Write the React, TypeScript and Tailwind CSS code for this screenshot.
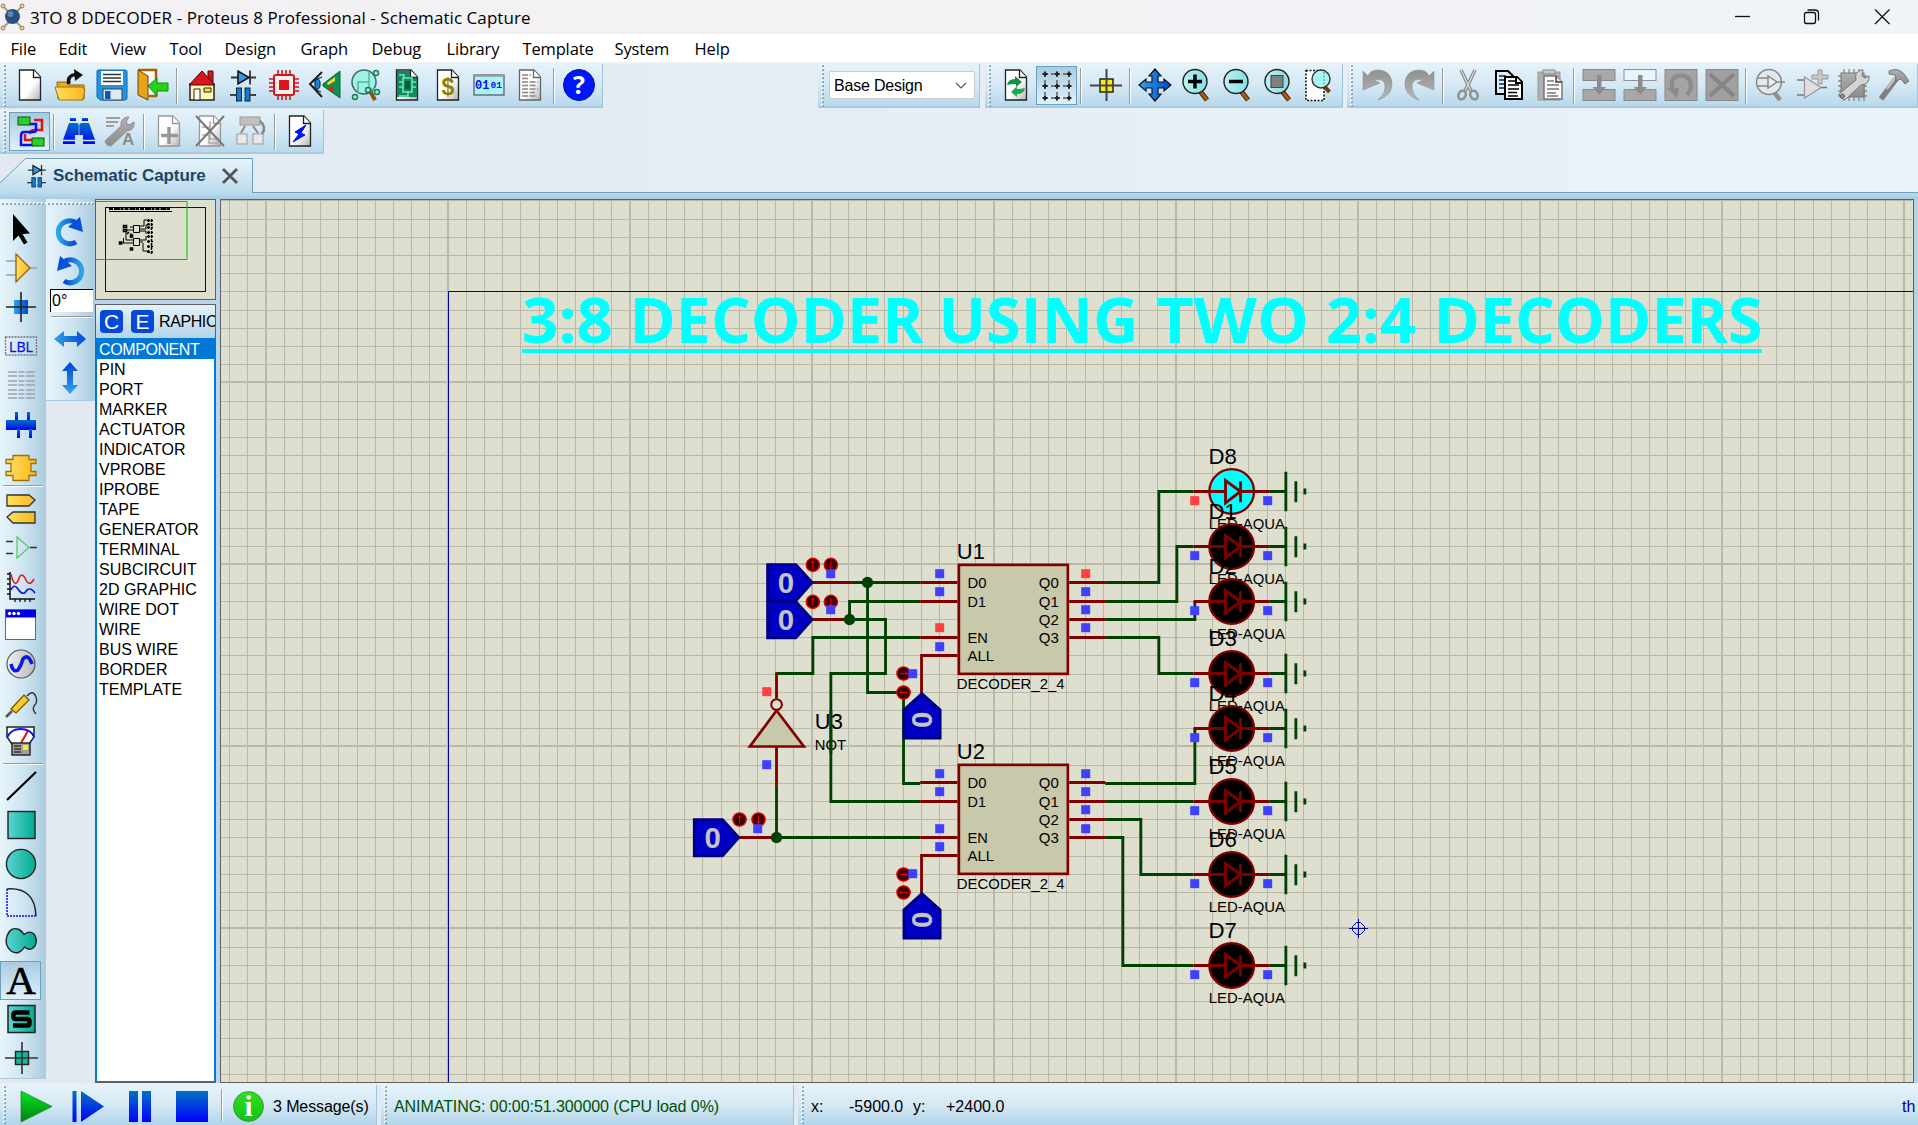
import React from 'react';

type Kids = { children?: React.ReactNode };

/* ---------- shared pieces ---------- */

function Ico({ children, s = 32 }: Kids & { s?: number }) {
  return (
    <svg width={s} height={s} viewBox="0 0 32 32" className="block shrink-0 overflow-visible">
      {children}
    </svg>
  );
}

function Defs() {
  const g = (id: string, a: string, b: string, vertical = false) => (
    <linearGradient id={id} x1="0" y1="0" x2={vertical ? '0' : '1'} y2={vertical ? '1' : '0'}>
      <stop offset="0" stopColor={a} />
      <stop offset="1" stopColor={b} />
    </linearGradient>
  );
  return (
    <svg width="0" height="0" className="absolute">
      <defs>
        {g('blueH', '#2fa4e4', '#0048d8')}
        {g('blueHr', '#0048d8', '#2fa4e4')}
        {g('blueV', '#0072c0', '#0000ff', true)}
        {g('blueVr', '#0040d8', '#30a8e8', true)}
        {g('teal', '#5cd4d4', '#00ac90')}
        {g('gold', '#ffe060', '#f8b820')}
        {g('grayV', '#909090', '#b8b8b8', true)}
        {g('grayH', '#f0f0f0', '#b8b8b8')}
        {g('greenV', '#00e820', '#008010', true)}
        {g('infoV', '#30e020', '#18c018', true)}
        {g('lens', '#b8f4f4', '#88dce4')}
        {g('gray2', '#b0b0b0', '#8c8c8c', true)}
        <linearGradient id="page" x1="0" y1="0" x2="1" y2="1">
          <stop offset="0.55" stopColor="#fff" />
          <stop offset="1" stopColor="#b0b0b0" />
        </linearGradient>
      </defs>
    </svg>
  );
}

const Page = ({ stroke = '#222' }: { stroke?: string }) => (
  <g>
    <path d="M5.500 1H20l6.500 7V31H5.500Z" fill="url(#page)" stroke={stroke} strokeWidth="1.300" />
    <path d="M19.500 1V8.500H26.500" fill="#fff" stroke={stroke} strokeWidth="1.300" />
  </g>
);

const Schem = () => (
  <g>
    <path d="M4 8.500H29M23 1.500V15.500" stroke="#333" strokeWidth="1.800" />
    <path d="M11 2V15L22 8.500Z" fill="#2c9ce0" stroke="#111" strokeWidth="1.500" />
    <path d="M3 26H29" stroke="#333" strokeWidth="1.800" />
    <rect x="9.500" y="19" width="5" height="13" fill="#1878d0" stroke="#123" />
    <rect x="18" y="19" width="5" height="13" fill="#1878d0" stroke="#123" />
    <rect x="15" y="24" width="2.500" height="4" fill="#c8e4f4" />
  </g>
);

const Lens = ({ children }: Kids) => (
  <g>
    <path d="M20 22L27 31" stroke="#402000" strokeWidth="5" />
    <path d="M20 22L27 31" stroke="#a85c10" strokeWidth="3" />
    <circle cx="15" cy="12.500" r="12" fill="url(#lens)" stroke="#222" strokeWidth="1.400" />
    {children}
  </g>
);

/* ---------- toolbar icons ---------- */

const icons: Record<string, React.ReactNode> = {
  newFile: <Page />,
  open: (
    <g>
      <path d="M2 13h9l3 3h15v14H3Z" fill="#e8a820" stroke="#906000" />
      <path d="M0 18h26l4 2-2 11H4Z" fill="url(#gold)" stroke="#a87000" />
      <path d="M14 15c-2-6 2-10 8-9" fill="none" stroke="#111" strokeWidth="3.500" />
      <path d="M19 0l9 6-8 6Z" fill="#111" />
    </g>
  ),
  save: (
    <g>
      <path d="M2 1H29q2 0 2 2V29q0 2-2 2H4l-3-3V3q0-2 1-2Z" fill="#2094e0" stroke="#0868b0" />
      <rect x="5" y="2" width="22" height="14" fill="#fff" />
      <path d="M7 5.500H25M7 9H25M7 12.500H25" stroke="#333" strokeWidth="1.300" />
      <rect x="7" y="20" width="19" height="11" fill="#e0e8f0" stroke="#345" />
      <rect x="9" y="22" width="5.500" height="8" fill="#1058b0" />
    </g>
  ),
  exit: (
    <g>
      <path d="M1 1H19V27H12" fill="#fff" stroke="#a86000" strokeWidth="2.500" />
      <path d="M1 1l10 6V31L1 26Z" fill="#e8a418" stroke="#704000" />
      <path d="M11 17l9-8v5h11v8H20v5Z" fill="#28d018" stroke="#109010" />
    </g>
  ),
  home: (
    <g>
      <path d="M4 15H28V31H4Z" fill="#fff8b8" stroke="#222" strokeWidth="1.500" />
      <path d="M22 2h5v13h-5Z" fill="#c02020" stroke="#600" />
      <path d="M16 2L29 16H3Z" fill="#d81818" stroke="#500" />
      <path d="M8 20h6v11H8Z" fill="#fff" stroke="#222" />
      <path d="M18 19h7v4h-7Z" fill="#f8e820" stroke="#222" />
    </g>
  ),
  schem: <Schem />,
  chip: (
    <g>
      <path d="M10 1V31M14 1V31M18 1V31M22 1V31M1 10H31M1 14H31M1 18H31M1 22H31" stroke="#d01818" strokeWidth="1.600" />
      <rect x="6" y="6" width="20" height="20" rx="2" fill="#f8f0f0" stroke="#d01818" strokeWidth="2" />
      <rect x="11" y="11" width="10" height="10" fill="#d81818" />
    </g>
  ),
  eye: (
    <g>
      <path d="M13 3L1 15L13 28" fill="none" stroke="#222" strokeWidth="2" />
      <path d="M4 13q5-4 9-5M4 17q4 5 8 6" fill="none" stroke="#222" strokeWidth="1.200" />
      <ellipse cx="8.500" cy="15" rx="2.600" ry="5" fill="#1880d8" stroke="#124" />
      <path d="M31 2V29L14 17V15Z" fill="#109050" stroke="#064" />
      <path d="M18 14l8-6v4l-7 4Z" fill="#f8e020" />
      <path d="M18 19l7-2v7Z" fill="#e02020" />
    </g>
  ),
  explore: (
    <g>
      <path d="M20 22L25 31" stroke="#905010" strokeWidth="4" />
      <circle cx="14" cy="13" r="12" fill="#a0f0e4" stroke="#386868" strokeWidth="1.500" />
      <path d="M8 24V13H19V3M19 13v7h6" fill="none" stroke="#50b8a0" strokeWidth="1.500" />
      <circle cx="26" cy="4" r="2.500" fill="#a8e8c8" stroke="#18805c" strokeWidth="1.500" />
      <circle cx="5" cy="28" r="2.500" fill="#a8e8c8" stroke="#18805c" strokeWidth="1.500" />
      <circle cx="18" cy="21" r="2.500" fill="#a8e8c8" stroke="#18805c" strokeWidth="1.500" />
      <circle cx="27" cy="23" r="2.500" fill="#a8e8c8" stroke="#18805c" strokeWidth="1.500" />
    </g>
  ),
  pcbDoc: (
    <g>
      <Page />
      <path d="M6 2H19V9H26V28H6Z" fill="#108860" />
      <path d="M12 9h9v14h-9ZM8 6h5v3M8 13h4M8 18h4M21 13h4M21 18h4M17 23v4H8" fill="none" stroke="#70e8b0" strokeWidth="1.500" />
      <rect x="14" y="12" width="5" height="8" fill="#085838" />
    </g>
  ),
  bom: (
    <g>
      <Page />
      <text x="16" y="26" textAnchor="middle" fontFamily="Liberation Sans" fontWeight="700" fontSize="23" fill="#908000">$</text>
    </g>
  ),
  code: (
    <g>
      <rect x="1" y="6" width="30" height="20" fill="#a8f4fc" stroke="#667" strokeWidth="1.400" />
      <path d="M1 6.500H31" stroke="#999" strokeWidth="2.500" />
      <text x="2" y="20" fontFamily="Liberation Mono" fontWeight="700" fontSize="12" fill="#1010e0">01</text>
      <text x="17.500" y="19" fontFamily="Liberation Mono" fontWeight="700" fontSize="9.500" fill="#1010e0">01</text>
    </g>
  ),
  doc: (
    <g>
      <Page stroke="#666" />
      <path d="M8 6h9M8 9.500h7M8 13h16M8 16.500h15M8 20h16M8 23.500h13M8 27h15" stroke="#888" strokeWidth="1.500" strokeDasharray="6 1.500" />
    </g>
  ),
  help: (
    <g>
      <circle cx="16" cy="16" r="15.500" fill="#0018f8" stroke="#0010b0" />
      <text x="16" y="25" textAnchor="middle" fontFamily="Open Sans" fontWeight="700" fontSize="25" fill="#fff">?</text>
    </g>
  ),
  hier: (
    <g>
      <path d="M20 4h8v10h-7q-5 0-5 4" fill="none" stroke="#e81010" strokeWidth="2.500" />
      <path d="M11 18v6h9" fill="none" stroke="#e81010" strokeWidth="2.500" />
      <path d="M14 8h8v6q0 2-3 2H10q-3 0-3 4v9h13" fill="none" stroke="#0010f0" strokeWidth="2.500" />
      <rect x="4" y="1" width="12" height="8" fill="#28d028" stroke="#105010" />
      <rect x="18" y="22" width="12" height="8" fill="#28d028" stroke="#105010" />
    </g>
  ),
  binoc: (
    <g fill="url(#blueV)">
      <path d="M7 3h6v3H7ZM19 3h6v3h-6Z" />
      <path d="M6 8h8l2 2 2-2h8l6 17v4H20V20h-8v9H0V25Z" />
      <path d="M0 25.500H12M20 25.500H32" stroke="#c8e4f4" strokeWidth="1.500" />
      <path d="M16 8v12" stroke="#6ab0f0" strokeWidth="1" />
    </g>
  ),
  tools: (
    <g>
      <path d="M2 3h14M2 7h12M2 11h8" stroke="#a0a0a0" strokeWidth="2" />
      <path d="M1 26L17 11q-1-7 6-9l2 0-3 5 3 3 5-3q1 8-7 9L7 31Q2 31 1 26Z" fill="url(#gray2)" stroke="#909090" />
      <text x="18" y="30" fontFamily="Liberation Sans" fontWeight="700" fontSize="17" fill="#8c8c8c">A</text>
    </g>
  ),
  addSheet: (
    <g>
      <Page stroke="#999" />
      <path d="M16 12V29M8 20.500H25" stroke="#999" strokeWidth="3.500" />
    </g>
  ),
  delSheet: (
    <g>
      <Page stroke="#999" />
      <path d="M8 12h8v-6M16 10v14h8M8 20h7v8h9" fill="none" stroke="#aaa" strokeWidth="1.500" />
      <path d="M2 1L30 31M30 1L2 31" stroke="#777" strokeWidth="2" />
    </g>
  ),
  tree: (
    <g>
      <rect x="5" y="2" width="20" height="8" fill="#c0c0c0" stroke="#999" />
      <path d="M10 11L6 18M18 11L23 18" stroke="#888" strokeWidth="2" />
      <path d="M25 6q7 6 2 13" fill="none" stroke="#888" strokeWidth="2.500" />
      <rect x="2" y="19" width="10" height="10" fill="#e8e8e8" stroke="#999" />
      <rect x="18" y="19" width="10" height="10" fill="#e8e8e8" stroke="#999" />
    </g>
  ),
  erc: (
    <g>
      <Page />
      <path d="M22 10L11 17l4 2-6 8 12-7-4-2Z" fill="#0010f8" stroke="#0010f8" />
    </g>
  ),
  redraw: (
    <g>
      <Page />
      <path d="M7 16q1-6 8-6V7l7 6-6 5v-3q-5 0-9 1Z" fill="#189048" />
      <path d="M25 19q-1 6-8 6v3l-6-5 6-6v3q5 0 8-1Z" fill="#20a850" />
    </g>
  ),
  grid: (
    <g stroke="#222" strokeWidth="1.400">
      <path d="M4 4H28M4 16H28M4 28H28M4 4V28M16 4V28M28 4V28" strokeDasharray="3 3" stroke="#555" />
      {[4, 16, 28].map((x) => [4, 16, 28].map((y) => <path key={`${x}-${y}`} d={`M${x - 2.500} ${y}h5M${x} ${y - 2.500}v5`} strokeWidth="2" />))}
    </g>
  ),
  origin: (
    <g>
      <rect x="10" y="10" width="13" height="13" fill="#f8e818" stroke="#222" strokeWidth="1.500" />
      <path d="M16.500 0V32M0 16.500H32" stroke="#444" strokeWidth="2" />
    </g>
  ),
  pan: (
    <path d="M16 0l6 7h-3v6h6V10l7 6-7 6V19H19v6h3l-6 7-6-7h3V19H7v3L0 16l7-6v3h6V7H10Z" fill="url(#blueH)" stroke="#112" strokeWidth="1.200" />
  ),
  zin: <Lens><path d="M8 12.500H22M15 5.500V19.500" stroke="#000" strokeWidth="3.500" /></Lens>,
  zout: <Lens><path d="M8 12.500H22" stroke="#000" strokeWidth="3.500" /></Lens>,
  zall: <Lens><rect x="9" y="6.500" width="12" height="12" fill="#808080" stroke="#444" /></Lens>,
  zarea: (
    <g>
      <rect x="3" y="1.500" width="18" height="30" fill="#fff" stroke="#111" strokeWidth="1.500" strokeDasharray="2 1.500" />
      <path d="M22 18l4.500 5" stroke="#703c08" strokeWidth="4" />
      <circle cx="18" cy="10" r="9" fill="#a8f4f4" stroke="#333" strokeWidth="1.400" />
      <path d="M21 3V17" stroke="#4a8888" strokeDasharray="2 1.500" />
    </g>
  ),
  undo: <path d="M1 2V21L18 14 12 11Q22 9 23 16 24 24 16 31 31 26 30 13 28 1 16 1 8 1 6 7Z" fill="url(#grayV)" stroke="#909090" strokeWidth=".6" />,
  redo: (
    <g transform="translate(32 0) scale(-1 1)">
      <path d="M1 2V21L18 14 12 11Q22 9 23 16 24 24 16 31 31 26 30 13 28 1 16 1 8 1 6 7Z" fill="url(#grayV)" stroke="#909090" strokeWidth=".6" />
    </g>
  ),
  cut: (
    <g>
      <path d="M9 1L19 22M23 1L13 22" stroke="#808080" strokeWidth="3.500" />
      <path d="M9 1L19 22M23 1L13 22" stroke="#d8d8d8" strokeWidth="1.500" />
      <ellipse cx="10" cy="26" rx="3.500" ry="4.500" transform="rotate(30 10 26)" fill="none" stroke="#909090" strokeWidth="2.500" />
      <ellipse cx="22" cy="26" rx="3.500" ry="4.500" transform="rotate(-30 22 26)" fill="none" stroke="#909090" strokeWidth="2.500" />
    </g>
  ),
  copy: (
    <g>
      <path d="M3 2h12l5 5v18H3Z" fill="#d8f0fc" stroke="#000" strokeWidth="2" />
      <path d="M6 7h7M6 11h6M6 15h5M6 19h5" stroke="#124" strokeWidth="1.500" />
      <path d="M12 8h12l5 5v17H12Z" fill="#fff" stroke="#000" strokeWidth="2" />
      <path d="M23 8v6h6" fill="#fff" stroke="#000" strokeWidth="2" />
      <path d="M15 12h7M15 16h11M15 20h11M15 23.500h9M15 27h10" stroke="#000" strokeWidth="1.500" />
    </g>
  ),
  paste: (
    <g>
      <rect x="4" y="3" width="22" height="28" fill="#b0b0b0" stroke="#989898" />
      <rect x="9" y="1" width="12" height="4" fill="#c8c8c8" stroke="#888" />
      <path d="M10 7h12l6 6v17H10Z" fill="#fff" stroke="#777" strokeWidth="1.500" />
      <path d="M22 7v6h6" fill="#ddd" stroke="#444" strokeWidth="1.500" />
      <path d="M13 12h7M13 16h12M13 20h12M13 24h9M13 27h11" stroke="#777" strokeWidth="1.500" />
    </g>
  ),
  blockCopy: (
    <g>
      <rect x="0" y="0.500" width="32" height="11" fill="#a8a8a8" stroke="#888" />
      <rect x="0" y="20.500" width="32" height="11" fill="#a8a8a8" stroke="#888" />
      <path d="M14 6h4.500v12h4.500l-6.700 8-6.700-8H14Z" fill="#8c8c8c" />
    </g>
  ),
  blockMove: (
    <g>
      <rect x="0" y="0.500" width="32" height="11" fill="#e8f4fc" stroke="#909090" />
      <rect x="0" y="20.500" width="32" height="11" fill="#a8a8a8" stroke="#888" />
      <path d="M14 6h4.500v12h4.500l-6.700 8-6.700-8H14Z" fill="#8c8c8c" />
    </g>
  ),
  blockRot: (
    <g>
      <rect x="0" y="0.500" width="32" height="31" fill="#a4a4a4" stroke="#888" />
      <path d="M8 22Q4 9 13 7q9-2 12 5 3 7-3 14" fill="none" stroke="#8c8c8c" strokeWidth="4.500" />
      <path d="M2 19l12 0-2 10Z" fill="#8c8c8c" />
    </g>
  ),
  blockDel: (
    <g>
      <rect x="0" y="0.500" width="32" height="31" fill="#a0a0a0" stroke="#888" />
      <path d="M4 5L28 27M28 5L4 27" stroke="#858585" strokeWidth="4" />
    </g>
  ),
  pick: (
    <g>
      <path d="M19 23l6 8" stroke="#909090" strokeWidth="4.500" />
      <circle cx="14" cy="13" r="12.500" fill="#e4e8ec" stroke="#888" strokeWidth="1.500" />
      <path d="M13 7V19L22 13ZM3 9h10M3 17h10M22 13h8" fill="#eee" stroke="#888" strokeWidth="1.500" />
    </g>
  ),
  makeDev: (
    <g>
      <path d="M1 11h8M1 26h8M25 18.500h6" stroke="#777" strokeWidth="1.600" />
      <path d="M8.500 8V29L25 18.500Z" fill="#e0e0e0" stroke="#999" strokeWidth="1.300" />
      <path d="M22 1h4v5h6v4h-6v5h-4v-5h-6V6h6Z" fill="#c8c8c8" stroke="#999" />
    </g>
  ),
  packTool: (
    <g>
      <path d="M7 0V32M12 0V32M17 0V32M22 0V32M27 8V32M1 7H30M1 12H30M1 17H30M1 22H30M1 27H30" stroke="#888" strokeWidth="1.300" />
      <rect x="4" y="4" width="23" height="24" fill="url(#gray2)" stroke="#777" />
      <path d="M2 25L19 11q-2-8 5-10l2 0-1 6 3 2 4-2q1 8-8 9L9 30q-5 2-7-5Z" fill="#d4d4d4" stroke="#777" />
      <circle cx="5.500" cy="27" r="2" fill="#999" stroke="#555" />
    </g>
  ),
  hammer: (
    <g>
      <path d="M3 30L18 10" stroke="#808080" strokeWidth="5.500" />
      <path d="M9 20L17 9" stroke="#ccc" strokeWidth="2" />
      <path d="M11 2q9-4 15 3l5 7-4 3-4-5-5 2-1-6-6-1Z" fill="url(#gray2)" stroke="#777" />
    </g>
  ),

  /* mode icons */
  arrow: <path d="M8 1V28L13.500 22.500 19 31.500 22.500 29.500 17.500 21 25 20.500Z" fill="#000" />,
  amp: (
    <g>
      <path d="M1 9h11M1 23h11M24 16h8" stroke="#98a4b0" strokeWidth="1.600" />
      <path d="M11 2V30L25 16Z" fill="url(#gold)" stroke="#906010" strokeWidth="1.300" />
    </g>
  ),
  junction: (
    <g>
      <rect x="9" y="9" width="14" height="14" fill="url(#blueH)" />
      <path d="M16 1V31M1 16H31" stroke="#222" strokeWidth="1.600" />
    </g>
  ),
  lbl: (
    <g>
      <rect x="0.500" y="7" width="31" height="18" fill="none" stroke="#777" strokeDasharray="2 1" strokeWidth="1.300" />
      <text x="16" y="21.800" textAnchor="middle" fontFamily="Open Sans" fontSize="15" textLength="24" lengthAdjust="spacingAndGlyphs" fill="#1010e0" stroke="#1010e0" strokeWidth=".3">LBL</text>
    </g>
  ),
  script: <path d="M3 3H30M3 7H30M3 12H30M3 16H30M3 21H30M3 25H30M3 29H30" stroke="#9aa4aa" strokeWidth="1.400" strokeDasharray="9 1.500 6 1.500" />,
  bus: (
    <g fill="url(#blueV)">
      <rect x="10" y="3" width="3" height="9" />
      <rect x="22" y="3" width="3" height="9" />
      <rect x="1" y="11" width="30" height="10" />
      <rect x="12" y="20" width="3" height="9" />
      <rect x="24" y="20" width="3" height="9" />
    </g>
  ),
  sub: (
    <path transform="translate(0 5)" d="M8 2.500h16v4h7v4h-5v8h5v4h-7v5H8v-5H1v-4h5v-8H1v-4h7Z" fill="url(#gold)" stroke="#a07010" strokeWidth="1.300" />
  ),
  terms: (
    <g fill="url(#gold)" stroke="#333" strokeWidth="1.300">
      <path d="M2 2H24l6 5-6 6H2Z" />
      <path d="M30 19H8l-6 5 6 6H30Z" />
    </g>
  ),
  pin: (
    <g fill="none">
      <path d="M1 9.500h7M1 21.500h7M25 15.500h7" stroke="#333" strokeWidth="1.400" />
      <path d="M12 5V26L24 15.500Z" stroke="#60c870" strokeWidth="1.300" />
    </g>
  ),
  graph: (
    <g fill="none">
      <path d="M5 2V29H30" stroke="#111" strokeWidth="1.500" />
      <path d="M2 4h3M2 9h3M2 14h3M2 19h3M2 24h3M10 29v3M15 29v3M20 29v3M25 29v3" stroke="#111" strokeWidth="1.300" />
      <path d="M6 4Q9 18 13 11 16 1 20 8 24 18 29 9" stroke="#e02020" strokeWidth="1.600" />
      <path d="M6 20Q9 13 13 19 18 27 22 20 26 17 30 23" stroke="#1010e8" strokeWidth="1.600" />
    </g>
  ),
  popup: (
    <g>
      <rect x="0.500" y="0.500" width="30" height="30" fill="#fff" stroke="#666" />
      <rect x="1" y="1" width="30" height="7.500" fill="#0000e8" />
      <circle cx="4.500" cy="4.500" r="1.700" fill="#fff" />
      <circle cx="9" cy="4.500" r="1.700" fill="#fff" />
      <circle cx="13.500" cy="4.500" r="1.700" fill="#fff" />
    </g>
  ),
  gen: (
    <g>
      <circle cx="16" cy="16" r="14" fill="url(#grayH)" stroke="#555" strokeWidth="1.200" />
      <path d="M6 16Q8 25 13 22 16 18 18 11 23 5 27 16" fill="none" stroke="#0818e8" strokeWidth="3.600" />
    </g>
  ),
  probe: (
    <g>
      <path d="M1 30l6-6" stroke="#555" strokeWidth="2.500" />
      <path d="M6 22L19 8l5 5L11 26Z" fill="#f8cc30" stroke="#705000" strokeWidth="1.200" />
      <path d="M22 9q6-7 9 1 2 5-2 9-2 4 2 8" fill="none" stroke="#333" strokeWidth="1.400" />
    </g>
  ),
  meter: (
    <g>
      <path d="M2 2H29V12L24 19H7L2 12Z" fill="#fff" stroke="#222" strokeWidth="1.500" />
      <path d="M2.500 12Q6 4 15.500 4 26 4 29 12" fill="none" stroke="#1010e8" strokeWidth="1.800" />
      <path d="M16 18L23 6" stroke="#e01010" strokeWidth="2" />
      <rect x="7" y="18" width="18" height="12" fill="#a0a0a0" stroke="#222" strokeWidth="1.400" />
      <path d="M9 21h7M9 24h7M9 27h7" stroke="#333" strokeWidth="1.300" />
      <rect x="18" y="20" width="5" height="5" fill="#f8f020" />
    </g>
  ),
  line: <path d="M2 30L31 2" stroke="#000" strokeWidth="2.200" />,
  box: <rect x="3" y="2.500" width="27" height="27" fill="url(#teal)" stroke="#222" strokeWidth="1.400" />,
  circ: <circle cx="16" cy="16" r="14.600" fill="url(#teal)" stroke="#222" strokeWidth="1.400" />,
  arc: (
    <g fill="none">
      <path d="M2 2V29H31" stroke="#1010e0" strokeWidth="1.500" strokeDasharray="2 1" />
      <path d="M2 2Q30 0 31 29" stroke="#222" strokeWidth="1.500" />
    </g>
  ),
  blob: <path d="M19 9.500Q24 5 29 9 33 15 30 21 25 27 19.500 22 14 31 6 26-1 20 2 11 6 1 14 4.500 17 6 19 9.500Z" fill="url(#teal)" stroke="#222" strokeWidth="1.400" />,
  textA: <text x="16" y="29.500" textAnchor="middle" fontFamily="Liberation Serif" fontSize="41" stroke="#000" strokeWidth=".7">A</text>,
  symS: (
    <g>
      <rect x="3" y="2.500" width="27" height="27" fill="url(#teal)" stroke="#222" strokeWidth="1.500" />
      <path d="M24.500 9.500H10.500q-2 0-2 2v2.500q0 2 2 2H22q2.500 0 2.500 2V20.500q0 2-2 2H8" fill="none" stroke="#000" strokeWidth="4.400" />
    </g>
  ),
  mark: (
    <g>
      <rect x="10.500" y="9.500" width="13" height="13" fill="#10b898" stroke="#222" strokeWidth="1.400" />
      <path d="M17 0V32M0 16H33" stroke="#333" strokeWidth="1.600" />
    </g>
  ),
  rotCw: (
    <g>
      <path d="M23 26A11.500 11.500 0 1 1 22 6" fill="none" stroke="url(#blueH)" strokeWidth="5" />
      <path d="M27 1L30 16 15 11Z" fill="#0850d8" />
    </g>
  ),
  rotCcw: (
    <g>
      <path d="M9 26A11.500 11.500 0 1 0 10 6" fill="none" stroke="url(#blueHr)" strokeWidth="5" />
      <path d="M5 1L2 16 17 11Z" fill="#0850d8" />
    </g>
  ),
  flipH: <path d="M0 16l10-8v5h13V8l9 8-9 8v-5H10v5Z" fill="url(#blueH)" />,
  flipV: <path d="M16 0l8 9h-5v14h5l-8 9-8-9h5V9H8Z" fill="url(#blueVr)" />,
};

/* ---------- toolbars ---------- */

const Grip = ({ tight }: { tight?: boolean }) => (
  <div className={tight ? 'flex w-[9px] shrink-0 flex-col items-center gap-[2px] overflow-hidden pt-[1px]' : 'flex w-[10px] shrink-0 flex-col items-center gap-[2px] overflow-hidden pt-[1px]'}>
    {Array.from({ length: 12 }, (_, i) => (
      <span key={i} className="size-[2px] shrink-0 bg-[#8fa9ba] shadow-[-1px_-1px_0_#fff]" />
    ))}
  </div>
);

const HGrip = () => (
  <div className="flex h-[10px] shrink-0 items-center gap-[2px] overflow-hidden pl-[2px]">
    {Array.from({ length: 12 }, (_, i) => (
      <span key={i} className="size-[2px] shrink-0 bg-[#8fa9ba] shadow-[-1px_-1px_0_#fff]" />
    ))}
  </div>
);

const Sep = () => (
  <div className="flex w-2 shrink-0 justify-center py-[4px]">
    <span className="w-px bg-[#9a9a9a]" />
    <span className="w-px bg-white" />
  </div>
);

function Bar({ items, pressed, tight, children }: Kids & { items?: string[]; pressed?: string; tight?: boolean }) {
  return (
    <div className="flex h-11 shrink-0 border-r border-[#a0c4da] bg-gradient-to-b from-[#e5f3fa] via-[#d4e8f4] to-[#b5d7ea] shadow-[inset_0_-2px_0_#a9cbe0]">
      <Grip tight={tight} />
      {items?.map((n, i) =>
        n === '|' ? (
          <Sep key={i} />
        ) : (
          <div
            key={i}
            className={
              n === pressed
                ? 'mt-[2px] flex h-[39px] w-[41px] shrink-0 items-center justify-center border border-[#6a9fc0] bg-gradient-to-b from-[#a9cbe0] to-[#dff0fa]'
                : 'flex h-[42px] w-[41px] shrink-0 items-center justify-center'
            }
          >
            <Ico>{icons[n]}</Ico>
          </div>
        ),
      )}
      {children}
    </div>
  );
}

const menus: [string, string][] = [
  ['File', 'w-[48px]'],
  ['Edit', 'w-[52px]'],
  ['View', 'w-[59px]'],
  ['Tool', 'w-[55px]'],
  ['Design', 'w-[76px]'],
  ['Graph', 'w-[71px]'],
  ['Debug', 'w-[75px]'],
  ['Library', 'w-[76px]'],
  ['Template', 'w-[92px]'],
  ['System', 'w-[80px]'],
  ['Help', 'w-[60px]'],
];

const modes = [
  ['arrow', 'amp', 'junction', 'lbl', 'script', 'bus', 'sub'],
  ['terms', 'pin', 'graph', 'popup', 'gen', 'probe', 'meter'],
  ['line', 'box', 'circ', 'arc', 'blob', 'textA', 'symS', 'mark'],
];

const styles = [
  'COMPONENT', 'PIN', 'PORT', 'MARKER', 'ACTUATOR', 'INDICATOR', 'VPROBE', 'IPROBE', 'TAPE', 'GENERATOR',
  'TERMINAL', 'SUBCIRCUIT', '2D GRAPHIC', 'WIRE DOT', 'WIRE', 'BUS WIRE', 'BORDER', 'TEMPLATE',
];

const HSep = () => (
  <div className="flex h-[6px] shrink-0 flex-col justify-center px-[3px]">
    <span className="h-px bg-[#9a9a9a]" />
    <span className="h-px bg-white" />
  </div>
);

/* ---------- schematic ---------- */

const WIRE = '#004000';
const PIN = '#800000';
const SANS = 'Liberation Sans, Arial, sans-serif';

const Sq = ({ x, y, hot }: { x: number; y: number; hot?: boolean }) => (
  <rect x={x} y={y} width="27" height="27" fill={hot ? '#ff4040' : '#4040ff'} />
);

const T = ({ x, y, s, w, children }: Kids & { x: number; y: number; s: number; w?: number }) => (
  <text x={x} y={y} fontFamily={SANS} fontSize={s} textLength={w} lengthAdjust="spacingAndGlyphs">
    {children}
  </text>
);

function Led({ name, cy, on }: { name: string; cy: number; on?: boolean }) {
  return (
    <g transform={`translate(1060.200 ${cy}) scale(.33333)`} fill="none" strokeWidth="8.500">
      <g fill="#000">
        <T x={445} y={-83} s={67} w={85}>{name}</T>
      </g>
      <circle cx="514.500" cy="0" r="67" fill={on ? '#00ffff' : '#000'} stroke={PIN} strokeWidth="7" />
      <path d="M400 0H496M541 0H627M541-31V32M496-33V34L541 0Z" stroke={PIN} />
      <path d="M627 0H677M677-59V59M707-31V32M734-9V9" stroke={WIRE} />
      <Sq x={390} y={14} hot={on} />
      <Sq x={609} y={14} />
      <g fill="#000">
        <T x={446} y={112} s={46} w={228}>LED-AQUA</T>
      </g>
    </g>
  );
}

function State({ x, y, up }: { x: number; y: number; up?: boolean }) {
  return (
    <g transform={`translate(${x} ${y})${up ? ' rotate(-90)' : ''}`}>
      <path d="M-136-54H-51L-2 0-51 55H-136Z" fill="#0000c4" stroke="#000080" strokeWidth="8" />
      <text x="-81" y="31" textAnchor="middle" fontFamily={SANS} fontWeight="700" fontSize="89" textLength="49" lengthAdjust="spacingAndGlyphs" fill="#c4c4c4">0</text>
    </g>
  );
}

function Tog({ x, y, r }: { x: number; y: number; r: number }) {
  return (
    <g transform={`translate(${x} ${y}) rotate(${r})`} fill="none" stroke="#f00000">
      <circle r="20" fill="#380000" strokeWidth="4" />
      <path d="M0 12V-11M-6-5L0-12 6-5" strokeWidth="3" />
    </g>
  );
}

function Decoder({ y, name }: { y: number; name: string }) {
  return (
    <g transform={`translate(0 ${y})`}>
      <rect x="836" y="104" width="327" height="327" fill="#c8c8aa" stroke={PIN} strokeWidth="8" />
      <T x={830} y={86} s={67} w={84}>{name}</T>
      <T x={830} y={477} s={46} w={323}>DECODER_2_4</T>
      <T x={862} y={174} s={46} w={57}>D0</T>
      <T x={862} y={231} s={46} w={55}>D1</T>
      <T x={862} y={339} s={46} w={61}>EN</T>
      <T x={862} y={393} s={46} w={80}>ALL</T>
      {[174, 231, 285, 339].map((ty, i) => (
        <T key={ty} x={1076} y={ty} s={46} w={60}>{`Q${i}`}</T>
      ))}
      <path d="M720 157H832M720 214H832M720 322H832M724 490V376H832" fill="none" stroke={PIN} strokeWidth="8.500" />
      <path d="M1167 157H1275M1167 214H1275M1167 268H1275M1167 322H1275" fill="none" stroke={PIN} strokeWidth="8.500" />
    </g>
  );
}

const DX = 448;
const vLines = Array.from({ length: 95 }, (_, i) => i - 12);
const hLines = Array.from({ length: 49 }, (_, i) => i);

const titleWords: [string, number, number][] = [
  ['3:8', 522, 91],
  ['DECODER', 629.5, 294],
  ['USING', 938.5, 200],
  ['TWO', 1156, 153],
  ['2:4', 1326, 90],
  ['DECODERS', 1433.5, 329],
];

function Schematic() {
  return (
    <svg width="1694" height="884" viewBox="220 199 1694 884" className="block shrink-0 bg-[#dfdfcf]">
      <g fill="#b9b9a9">
        {vLines.map((k) => {
          const x = DX + 18.2 * k;
          if (x < 221 || x > 1911) return null;
          return k % 10 === 0 ? <rect key={k} x={Math.round(x) - 1} y="200" width="2" height="882" /> : <rect key={k} x={Math.floor(x)} y="200" width="1" height="882" />;
        })}
        {hLines.map((k) => {
          const y = 200.4 + 18.2 * k;
          return k % 10 === 0 && k > 0 ? <rect key={k} x="221" y={Math.round(y) - 1} width="1691" height="2" /> : <rect key={k} x="221" y={Math.round(y)} width="1691" height="1" />;
        })}
      </g>
      <path d="M448.500 1082V291.500H1913" fill="none" stroke="#0000b0" strokeWidth="1" />

      <text y="343" fontFamily="Open Sans, Noto Sans, sans-serif" fontWeight="700" fontSize="63.500" fill="#00ffff">
        {titleWords.map(([w, x, len]) => (
          <tspan key={w} x={x} textLength={len} lengthAdjust="spacingAndGlyphs">{w}</tspan>
        ))}
      </text>
      <rect x="522" y="349" width="1240" height="4" fill="#00ffff" />

      <g transform="translate(680.200 530.200) scale(.33333)">
        <g fill="none" stroke={WIRE} strokeWidth="8.500">
          <path d="M512 157H720M562 157V487H670V760H720" />
          <path d="M720 214H508V268H616V430H452V814H720" />
          <path d="M720 322H398V430H289" />
          <path d="M289 765V922H720" />
          <g transform="translate(1140 -300)">
            <path d="M135 457H296V184H400M135 514H350V349H400M135 568H404V514M135 622H296V730H400" />
          </g>
          <g transform="translate(1140 510)">
            <path d="M135 250H404V85M135 304H400M135 358H242V523H400M135 412H188V796H400" />
          </g>
        </g>
        <path d="M398 157H514M398 268H508M178 922H289M289 426V505M289 650V765" fill="none" stroke={PIN} strokeWidth="8.500" />
        <Decoder y={0} name="U1" />
        <Decoder y={600} name="U2" />
        <g fill={WIRE}>
          <circle cx="562" cy="157" r="17" />
          <circle cx="508" cy="268" r="17" />
          <circle cx="289" cy="922" r="17" />
        </g>
        <path d="M289 541L209 649H371Z" fill="#c8c8aa" stroke={PIN} strokeWidth="8" />
        <circle cx="289" cy="523" r="16" fill="#dfdfcf" stroke={PIN} strokeWidth="6" />
        <T x={404} y={597} s={67} w={84}>U3</T>
        <T x={404} y={660} s={46} w={94}>NOT</T>
        <path d="M452 540V670" stroke={WIRE} strokeWidth="8.500" />
        <State x={398} y={157} />
        <State x={398} y={268} />
        <State x={178} y={922} />
        <State x={725} y={488} up />
        <State x={725} y={1088} up />
        <Tog x={398} y={104} r={0} />
        <Tog x={452} y={104} r={180} />
        <Tog x={398} y={215} r={0} />
        <Tog x={452} y={215} r={180} />
        <Tog x={178} y={868} r={0} />
        <Tog x={235} y={868} r={180} />
        <Tog x={670} y={430} r={90} />
        <Tog x={670} y={487} r={-90} />
        <Tog x={670} y={1033} r={90} />
        <Tog x={670} y={1087} r={-90} />
        {[[438, 117], [438, 225], [765, 117], [765, 171], [765, 336], [684, 417], [246, 690], [219, 882], [765, 717], [765, 771], [765, 882], [765, 936], [684, 1017],
          [1203, 171], [1203, 225], [1203, 279], [1203, 717], [1203, 771], [1203, 825], [1203, 882]].map(([x, y]) => (
          <Sq key={`${x}-${y}`} x={x} y={y} />
        ))}
        {[[765, 279], [246, 471], [1203, 117]].map(([x, y]) => (
          <Sq key={`${x}-${y}`} x={x} y={y} hot />
        ))}
      </g>

      <Led name="D8" cy={491.5} on />
      <Led name="D1" cy={546.5} />
      <Led name="D2" cy={601.5} />
      <Led name="D3" cy={673.5} />
      <Led name="D4" cy={728.5} />
      <Led name="D5" cy={801.5} />
      <Led name="D6" cy={874.5} />
      <Led name="D7" cy={965.5} />

      <g fill="none" stroke="#0000b0">
        <path d="M1349 928.500H1368M1358.500 919V938" />
        <path d="M1356.500 922.500h4l4 4v4l-4 4h-4l-4-4v-4Z" />
      </g>
      <rect x="220.500" y="199.500" width="1693" height="883" fill="none" stroke="#606060" />
    </svg>
  );
}

function Overview() {
  return (
    <svg width="121" height="101" viewBox="95 199 121 101" className="block shrink-0 bg-[#dfdfcf]">
      <rect x="105.500" y="207.500" width="100" height="84" fill="none" stroke="#0000b0" />
      <path d="M109 208.500H171" stroke="#000" strokeWidth="3" strokeDasharray="4 1 6 .5 3 1" />
      <path d="M109 211.500H172" stroke="#000" />
      <g fill="none" stroke="#000">
        <path d="M133.500 225.500h6v7h-6ZM133.500 238.500h6v7h-6Z" />
        <path d="M140 226h4v-6h3M140 229h6v-4h2M140 231h6v3M140 240h6v-4M140 242h3M143 243v8h5M133 227h-3M133 230h-7v10h7M133 243h-11M123.500 243v-5M131 233v5" />
        <path d="M123.500 225.500h3v2h-3ZM123.500 229.500h3v2h-3ZM119.500 242h2v2h-2ZM130.500 235h2v2h-2ZM130.500 248h2v2h-2ZM127 234l2-2" strokeWidth="1.600" />
        <path d="M147 220.500h6M147 224.500h6M147 227.500h6M147 232.500h6M147 236.500h6M147 241.500h6M147 246.500h6M147 252h6M148.500 219v5M148.500 226v4M148.500 231v8M148.500 240v4M148.500 245v4M148.500 250v4M151.500 219v35" strokeWidth="1.500" strokeDasharray="3 1" />
      </g>
      <path d="M95 201.500H187V259.500H95" fill="none" stroke="#00c000" />
      <rect x="95.500" y="199.500" width="120" height="100" fill="none" stroke="#606060" />
    </svg>
  );
}

/* ---------- window ---------- */

export default function App() {
  return (
    <div className="flex h-[1125px] w-[1918px] flex-col overflow-hidden bg-gradient-to-r from-[#e2e9f0] to-[#eaf2fa] font-['Liberation_Sans',Arial,sans-serif] text-black">
      <Defs />

      <header className="flex h-[34px] shrink-0 items-center bg-gradient-to-r from-[#f4f0f3] via-[#f2f1f4] to-[#eff4f8]">
        <svg width="26" height="28" viewBox="0 0 26 28" className="block">
          <path d="M3 3L22 25M22 3L3 25" stroke="#a8997c" strokeWidth="1.500" />
          <path d="M3 3q10 12 19 0M3 25q10-12 19 0" fill="none" stroke="#a8997c" strokeWidth="1.300" />
          <circle cx="12.500" cy="13.500" r="7.500" fill="#28507c" />
          <circle cx="10.500" cy="11" r="3" fill="#5c88b4" />
          {[[3, 3], [22, 3], [3, 25], [22, 25]].map(([x, y]) => (
            <circle key={`${x}-${y}`} cx={x} cy={y} r="2" fill="#e8d4a8" stroke="#806848" strokeWidth=".8" />
          ))}
        </svg>
        <span className="ml-1 whitespace-nowrap pt-px font-['Open_Sans',sans-serif] text-[17px] tracking-[0.07px]">
          3TO 8 DDECODER - Proteus 8 Professional - Schematic Capture
        </span>
        <div className="ml-auto flex">
          <svg width="192" height="32" viewBox="1726 0 192 32" className="block" fill="none" stroke="#111" strokeWidth="1.300">
            <path d="M1735 15.500H1750" />
            <rect x="1804.500" y="11.500" width="11" height="11" rx="2" />
            <path d="M1807.500 9H1815q3.500 0 3.500 3.500V19.500" />
            <path d="M1875 8.500L1889.500 23M1889.500 8.500L1875 23" />
          </svg>
        </div>
      </header>

      <nav className="flex h-7 shrink-0 items-center bg-white pt-[3px] pl-[10.5px] font-['Open_Sans',sans-serif] text-[16.5px] tracking-[-0.15px]">
        {menus.map(([m, w]) => (
          <span key={m} className={w}>{m}</span>
        ))}
      </nav>
      <div className="h-[2px] shrink-0 bg-[#f0f2f4]" />

      <div className="flex h-[46px] shrink-0">
        <Bar tight items={['newFile', 'open', 'save', 'exit', '|', 'home', 'schem', 'chip', 'eye', 'explore', 'pcbDoc', 'bom', 'code', 'doc', '|', 'help']}>
          <span className="w-[3px]" />
        </Bar>
        <div className="ml-[215px] flex">
          <Bar>
            <div className="mt-[7px] mr-[4px] ml-[1px] flex h-[28px] w-[146px] items-center justify-between rounded-[2px] border border-[#c8ccd0] bg-white px-[4px] pt-px text-[16px] tracking-[-0.2px]">
              Base Design
              <svg width="12" height="7" viewBox="0 0 12 7" className="mr-[3px]">
                <path d="M1 1L6 6L11 1" fill="none" stroke="#555" strokeWidth="1.200" />
              </svg>
            </div>
          </Bar>
        </div>
        <div className="ml-[5px] flex">
          <Bar pressed="grid" items={['redraw', 'grid', '|', 'origin', '|', 'pan', 'zin', 'zout', 'zall', 'zarea']}>
            <span className="w-[3px]" />
          </Bar>
        </div>
        <div className="ml-[4px] flex">
          <Bar items={['undo', 'redo', '|', 'cut', 'copy', 'paste', '|', 'blockCopy', 'blockMove', 'blockRot', 'blockDel', '|', 'pick', 'makeDev', 'packTool', 'hammer']}>
            <span className="w-[3px]" />
          </Bar>
        </div>
      </div>

      <div className="flex h-[48px] shrink-0">
        <Bar tight pressed="hier" items={['hier', '|', 'binoc', 'tools', '|', 'addSheet', 'delSheet', 'tree', '|', 'erc']}>
          <span className="w-[3px]" />
        </Bar>
      </div>

      <div className="flex h-[35px] shrink-0 items-end">
        <div className="relative flex h-[35px] w-[253px] shrink-0 items-center">
          <svg width="253" height="35" viewBox="0 0 253 35" className="absolute inset-0">
            <defs>
              <linearGradient id="tab" x1="0" y1="0" x2="0" y2="1">
                <stop offset="0" stopColor="#e8f5fb" />
                <stop offset="1" stopColor="#badaed" />
              </linearGradient>
            </defs>
            <path d="M0 25L25.500.5H252.500V35H0Z" fill="url(#tab)" />
            <path d="M0 25L25.500.5H252.500V35" fill="none" stroke="#6a9fc0" />
          </svg>
          <div className="relative flex items-center pl-[25px]">
            <Ico s={23}><Schem /></Ico>
            <span className="ml-[5px] w-[169px] whitespace-nowrap text-[17px] font-bold tracking-[-0.08px] text-[#1c4668]">Schematic Capture</span>
            <svg width="16" height="16" viewBox="0 0 16 16">
              <path d="M1 1L15 15M15 1L1 15" stroke="#555" strokeWidth="2.800" />
            </svg>
          </div>
        </div>
        <div className="h-px flex-1 bg-[#6a9fc0]" />
      </div>
      <div className="h-[6px] shrink-0 bg-gradient-to-b from-[#badaed] to-[#a9cbe0]" />

      <main className="flex h-[884px] shrink-0">
        <aside className="flex h-[880px] w-[46px] shrink-0 flex-col border-b border-[#a9cbe0] bg-gradient-to-r from-[#e8f5fb] via-[#cfe5f2] to-[#aaccdf]">
          <HGrip />
          {modes.map((group, gi) => (
            <React.Fragment key={gi}>
              {gi > 0 && <HSep />}
              {group.map((n) => (
                <div
                  key={n}
                  className={
                    n === 'textA'
                      ? 'flex h-[38.800px] w-[41px] shrink-0 items-center justify-center border border-[#6a9fc0] bg-gradient-to-b from-[#a9cbe0] to-[#dff0fa]'
                      : gi === 0
                        ? 'flex h-[39.200px] w-[41px] shrink-0 items-center justify-center'
                        : 'flex h-[38.800px] w-[41px] shrink-0 items-center justify-center'
                  }
                >
                  <Ico>{icons[n]}</Ico>
                </div>
              ))}
            </React.Fragment>
          ))}
        </aside>

        <aside className="flex h-[202px] w-[49px] shrink-0 flex-col border-b border-[#a9cbe0] bg-gradient-to-r from-[#e8f5fb] via-[#cfe5f2] to-[#aaccdf]">
          <HGrip />
          <div className="ml-[2px] flex h-[41px] w-[41px] items-center justify-center pt-[4px]"><Ico s={32}>{icons.rotCw}</Ico></div>
          <div className="ml-[4px] flex h-[39px] w-[41px] items-center justify-center pt-[2px]"><Ico s={32}>{icons.rotCcw}</Ico></div>
          <div className="ml-[4px] h-[23px] w-[43px] border-t border-l border-black bg-white pl-px text-[16px] leading-[21px]">0°</div>
          <div className="mt-[2px] pl-[2px]"><HSep /></div>
          <div className="ml-[3px] flex h-[38px] w-[41px] items-center justify-center"><Ico>{icons.flipH}</Ico></div>
          <div className="ml-[3px] flex h-[40px] w-[41px] items-center justify-center"><Ico>{icons.flipV}</Ico></div>
        </aside>

        <section className="flex w-[125px] shrink-0 flex-col bg-[#b9d6e8]">
          <Overview />
          <div className="mt-[4px] flex h-[779px] w-[121px] flex-col overflow-hidden border border-[#606060]">
            <div className="flex h-[33px] shrink-0 items-center overflow-hidden bg-gradient-to-b from-[#e5f3fa] to-[#b2d4e8] pl-[4px] text-[16px]">
              <span className="flex size-[23px] shrink-0 items-center justify-center rounded-[4px] bg-[#0848d8] text-[21px] text-white">C</span>
              <span className="ml-[8px] flex size-[23px] shrink-0 items-center justify-center rounded-[4px] bg-[#0848d8] text-[21px] text-white">E</span>
              <span className="ml-[5px] whitespace-nowrap tracking-[-0.4px]">RAPHIC</span>
            </div>
            <ul className="flex-1 border-x border-b border-[#0078d7] bg-white text-[16px]">
              {styles.map((s, i) => (
                <li key={s} className={i === 0 ? 'h-[21px] bg-[#0078d7] pl-[2px] leading-[24px] tracking-[-0.4px] text-white' : 'h-[20px] pl-[2px] leading-[22px] tracking-normal'}>
                  {s}
                </li>
              ))}
            </ul>
          </div>
        </section>

        <Schematic />
        <div className="flex-1 bg-[#b2d4e8]" />
      </main>

      <div className="h-[2px] shrink-0 bg-[#e8eff5]" />
      <footer className="flex h-[40px] shrink-0 items-stretch bg-[#e2e9f0] text-[16px]">
        <div className="flex w-[377px] shrink-0 border-r border-[#a0c4da] bg-gradient-to-b from-[#e5f3fa] via-[#d4e8f4] to-[#b2d4e8]">
          <Grip />
          <svg width="208" height="40" viewBox="10 -1 208 40" className="block shrink-0">
            <path d="M21 5V36L52 20.500Z" fill="url(#greenV)" stroke="#107010" strokeWidth=".6" />
            <rect x="72.500" y="5" width="4" height="31" fill="url(#blueV)" />
            <path d="M81 5V36L104 20.500Z" fill="url(#blueV)" />
            <rect x="129" y="5" width="9" height="31" fill="url(#blueV)" />
            <rect x="142" y="5" width="9" height="31" fill="url(#blueV)" />
            <rect x="176" y="5" width="32" height="31" fill="url(#blueV)" />
          </svg>
          <Sep />
          <svg width="31" height="31" viewBox="0 0 31 31" className="mt-[6px] ml-[7px] block shrink-0">
            <circle cx="15.500" cy="15.500" r="15" fill="url(#infoV)" stroke="#188018" strokeWidth=".6" />
            <text x="15.500" y="25" textAnchor="middle" fontFamily="Liberation Serif" fontWeight="700" fontSize="29" fill="#fff">i</text>
          </svg>
          <span className="ml-[9px] self-center whitespace-nowrap pt-[3px] tracking-[-0.1px]">3 Message(s)</span>
        </div>
        <div className="ml-[4px] flex w-[413px] shrink-0 border-r border-[#a0c4da] bg-gradient-to-b from-[#e5f3fa] via-[#d4e8f4] to-[#b2d4e8]">
          <Grip />
          <span className="ml-[3px] self-center whitespace-nowrap pt-[3px] tracking-[-0.07px] text-[#005000]">ANIMATING: 00:00:51.300000 (CPU load 0%)</span>
        </div>
        <div className="ml-[4px] flex flex-1 items-center bg-gradient-to-b from-[#e5f3fa] via-[#d4e8f4] to-[#b2d4e8]">
          <div className="flex h-full"><Grip /></div>
          <span className="ml-[3px] w-[38px] pt-[3px]">x:</span>
          <span className="w-[64px] pt-[3px]">-5900.0</span>
          <span className="w-[33px] pt-[3px]">y:</span>
          <span className="pt-[3px]">+2400.0</span>
          <span className="ml-auto w-[16px] overflow-hidden pt-[3px] whitespace-nowrap text-[#0000a0]">th</span>
        </div>
      </footer>
    </div>
  );
}
